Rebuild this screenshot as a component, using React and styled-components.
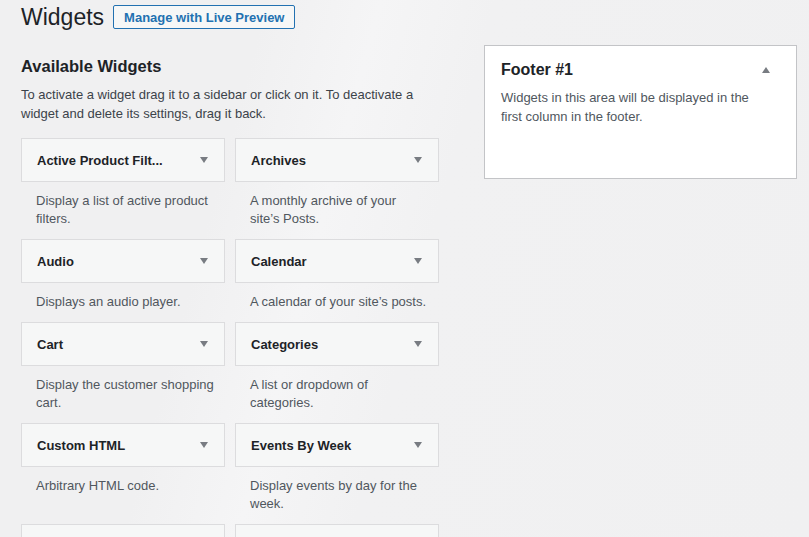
import React from 'react'
import styled, { createGlobalStyle } from 'styled-components'

const GlobalStyle = createGlobalStyle`
  html, body {
    margin: 0;
    height: 100%;
    overflow: hidden;
  }
  body {
    background: linear-gradient(
      105deg,
      #f0f0f1 0%,
      #f0f0f1 28%,
      #f5f5f6 40%,
      #f1f1f2 52%,
      #f0f0f1 100%
    );
    font-family: 'Liberation Sans', Arial, sans-serif;
    color: #1d2327;
  }
`

const Page = styled.div`
  padding: 5px 12px 0 21px;
`

const Header = styled.div`
  display: flex;
  align-items: center;
  gap: 9px;
`

const PageTitle = styled.h1`
  margin: 0;
  font-size: 23px;
  font-weight: 400;
  line-height: 24px;
  color: #1d2327;
`

const LiveButton = styled.button`
  height: 24px;
  padding: 0 10px;
  border: 1px solid #2271b1;
  border-radius: 2px;
  background: #f6f7f7;
  color: #2271b1;
  font-family: inherit;
  font-size: 13px;
  font-weight: 600;
  cursor: pointer;
`

const Main = styled.div`
  display: flex;
  align-items: flex-start;
  gap: 45px;
`

const Available = styled.div`
  width: 418px;
`

const SectionTitle = styled.h2`
  margin: 27px 0 0;
  font-size: 16.5px;
  font-weight: 700;
  line-height: 20px;
`

const Intro = styled.p`
  margin: 9px 0 0;
  font-size: 13px;
  line-height: 19px;
  color: #3c434a;
`

const Grid = styled.div`
  display: grid;
  grid-template-columns: 204px 204px;
  column-gap: 10px;
  row-gap: 11px;
  margin-top: 15px;
`

const Widget = styled.div`
  display: flex;
  flex-direction: column;
`

const WidgetTop = styled.div`
  height: 44px;
  box-sizing: border-box;
  display: flex;
  align-items: center;
  justify-content: space-between;
  padding: 0 16px 0 15px;
  background: #f6f7f7;
  border: 1px solid #dcdcde;
`

const WidgetName = styled.span`
  font-size: 13px;
  font-weight: 700;
  color: #1d2327;
`

const Caret = styled.span`
  width: 0;
  height: 0;
  border-left: 4.5px solid transparent;
  border-right: 4.5px solid transparent;
  border-top: ${(p) => (p.$up ? 'none' : '6px solid #787c82')};
  border-bottom: ${(p) => (p.$up ? '6px solid #787c82' : 'none')};
`

const WidgetDesc = styled.div`
  padding: 10px 10.6px 0 15px;
  font-size: 13px;
  line-height: 18px;
  color: #50575e;
`

const Sidebar = styled.div`
  width: 313px;
  margin-top: 16px;
  box-sizing: border-box;
  min-height: 134px;
  padding: 12px 26px 40px 16px;
  background: #fff;
  border: 1px solid #c3c4c7;
`

const SidebarHead = styled.div`
  display: flex;
  align-items: center;
  justify-content: space-between;
`

const SidebarTitle = styled.h3`
  margin: 0;
  font-size: 16px;
  font-weight: 700;
  line-height: 24px;
`

const SidebarDesc = styled.p`
  margin: 6px 0 0;
  font-size: 13px;
  line-height: 19px;
  color: #50575e;
`

const widgets = [
  { name: 'Active Product Filt...', desc: 'Display a list of active product filters.' },
  { name: 'Archives', desc: 'A monthly archive of your site\u2019s Posts.' },
  { name: 'Audio', desc: 'Displays an audio player.' },
  { name: 'Calendar', desc: 'A calendar of your site\u2019s posts.' },
  { name: 'Cart', desc: 'Display the customer shopping cart.' },
  { name: 'Categories', desc: 'A list or dropdown of categories.' },
  { name: 'Custom HTML', desc: 'Arbitrary HTML code.' },
  { name: 'Events By Week', desc: 'Display events by day for the week.' },
  { name: '', desc: '' },
  { name: '', desc: '' }
]

export default function App() {
  return (
    <>
      <GlobalStyle />
      <Page>
        <Header>
          <PageTitle>Widgets</PageTitle>
          <LiveButton>Manage with Live Preview</LiveButton>
        </Header>
        <Main>
          <Available>
            <SectionTitle>Available Widgets</SectionTitle>
            <Intro>
              To activate a widget drag it to a sidebar or click on it. To deactivate a widget and
              delete its settings, drag it back.
            </Intro>
            <Grid>
              {widgets.map((w, i) => (
                <Widget key={i}>
                  <WidgetTop>
                    <WidgetName>{w.name}</WidgetName>
                    {w.name && <Caret />}
                  </WidgetTop>
                  {w.desc && <WidgetDesc>{w.desc}</WidgetDesc>}
                </Widget>
              ))}
            </Grid>
          </Available>
          <Sidebar>
            <SidebarHead>
              <SidebarTitle>Footer #1</SidebarTitle>
              <Caret $up />
            </SidebarHead>
            <SidebarDesc>Widgets in this area will be displayed in the first column in the footer.</SidebarDesc>
          </Sidebar>
        </Main>
      </Page>
    </>
  )
}
